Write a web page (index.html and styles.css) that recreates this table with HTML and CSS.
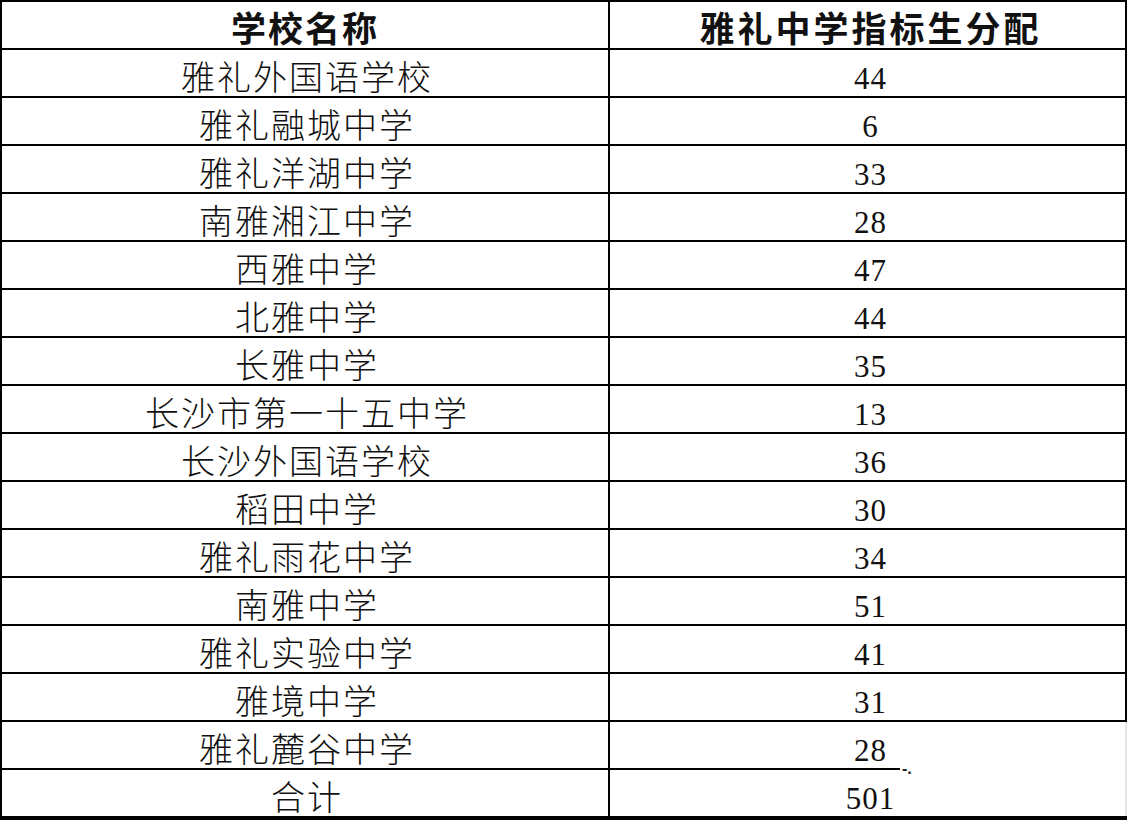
FILE: index.html
```html
<!DOCTYPE html>
<html lang="zh-CN">
<head>
<meta charset="utf-8">
<title>雅礼中学指标生分配</title>
<link rel="stylesheet" href="styles.css">
</head>
<body>
<div class="sheet">
  <div class="cell name head">学校名称</div>
  <div class="cell num head head-r">雅礼中学指标生分配</div>

  <div class="cell name">雅礼外国语学校</div><div class="cell num">44</div>
  <div class="cell name">雅礼融城中学</div><div class="cell num">6</div>
  <div class="cell name">雅礼洋湖中学</div><div class="cell num">33</div>
  <div class="cell name">南雅湘江中学</div><div class="cell num">28</div>
  <div class="cell name">西雅中学</div><div class="cell num">47</div>
  <div class="cell name">北雅中学</div><div class="cell num">44</div>
  <div class="cell name">长雅中学</div><div class="cell num">35</div>
  <div class="cell name">长沙市第一十五中学</div><div class="cell num">13</div>
  <div class="cell name">长沙外国语学校</div><div class="cell num">36</div>
  <div class="cell name">稻田中学</div><div class="cell num">30</div>
  <div class="cell name">雅礼雨花中学</div><div class="cell num">34</div>
  <div class="cell name">南雅中学</div><div class="cell num">51</div>
  <div class="cell name">雅礼实验中学</div><div class="cell num">41</div>
  <div class="cell name">雅境中学</div><div class="cell num">31</div>
  <div class="cell name">雅礼麓谷中学</div><div class="cell num partial faint">28<span class="mark">-.</span></div>
  <div class="cell name last">合计</div><div class="cell num last faint">501</div>
</div>
</body>
</html>
```

FILE: styles.css
```css
html, body {
  margin: 0;
  padding: 0;
  background: #ffffff;
}

.sheet {
  box-sizing: border-box;
  width: 1127px;
  height: 820px;
  border-top: 2px solid #000;
  border-left: 2px solid #000;
  border-bottom: 4px solid #000;
  display: grid;
  grid-template-columns: 608px 1fr;
  grid-template-rows: repeat(16, 48px) 46px;
  color: #111;
}

.cell {
  box-sizing: border-box;
  display: flex;
  align-items: center;
  justify-content: center;
  border-bottom: 2px solid #000;
  line-height: 1;
  white-space: nowrap;
}

.name {
  border-right: 2px solid #000;
  font-family: "Noto Sans CJK SC", "Noto Sans CJK JP", sans-serif;
  font-weight: 300;
  font-size: 34px;
  letter-spacing: 2px;
  padding-top: 6px;
  padding-left: 4px;
}

.num {
  border-right: 2px solid #000;
  font-family: "Liberation Serif", "DejaVu Serif", serif;
  font-size: 31px;
  letter-spacing: 1px;
  padding-top: 10px;
  padding-left: 6px;
}

.head {
  font-family: "Noto Sans CJK SC", "Noto Sans CJK JP", sans-serif;
  font-weight: 700;
  font-size: 35px;
  letter-spacing: 2px;
  padding-top: 3px;
  padding-left: 0;
}

.head-r {
  letter-spacing: 3px;
  padding-left: 6px;
}

.last {
  border-bottom: none;
}

.faint {
  border-right-color: #e6e6e6;
}

.partial {
  border-bottom: none;
  padding-bottom: 2px;
  background: linear-gradient(#000, #000) no-repeat left bottom / 290px 2px;
  position: relative;
}

.mark {
  position: absolute;
  left: 292px;
  bottom: -7px;
  font-family: "Liberation Sans", sans-serif;
  font-size: 16px;
  font-weight: 700;
  letter-spacing: 0;
  color: #222;
}
```
